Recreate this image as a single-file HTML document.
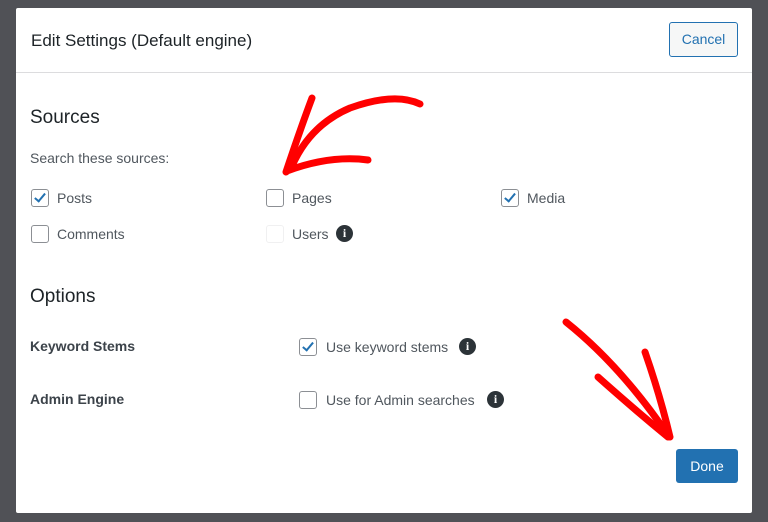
<!DOCTYPE html>
<html><head><meta charset="utf-8"><style>
body{margin:0;width:768px;height:522px;background:#505156;position:relative;overflow:hidden;font-family:"Liberation Sans",sans-serif;color:#2c3338}
.m{position:absolute;left:16px;top:8px;width:736px;height:505px;background:#fff;border-radius:2px}
.hd{height:64px;border-bottom:1px solid #dcdcde;position:relative}
.t{position:absolute;left:15px;top:23px;font-size:17px;color:#1d2327}
.cancel{position:absolute;right:14px;top:14px;width:67px;height:33px;border:1px solid #2271b1;border-radius:3px;background:#f6f7f7;color:#2271b1;font-size:14px;line-height:33px;text-align:center}
.a{position:absolute;font-size:14px}
.h{font-size:19px;color:#1d2327}
.cb{position:absolute;width:16px;height:16px;border:1px solid #8c8f94;border-radius:3px;background:#fff}
.cb.c::after{content:"";position:absolute;left:5px;top:1px;width:4px;height:9px;border:solid #2271b1;border-width:0 2.5px 2.5px 0;transform:rotate(40deg)}
.i{position:absolute;width:17px;height:17px;border-radius:50%;background:#2c3338;color:#fff;font:bold 12px/17px "Liberation Serif",serif;text-align:center}
.done{position:absolute;left:676px;top:449px;width:62px;height:34px;background:#2271b1;border-radius:3px;color:#fff;font-size:14px;line-height:34px;text-align:center}
</style></head><body>
<div class="m"><div class="hd"><div class="t">Edit Settings (Default engine)</div><div class="cancel">Cancel</div></div></div>
<div class="a h" style="left:30px;top:107px">Sources</div>
<div class="a" style="left:30px;top:150px;color:#50575e">Search these sources:</div>
<div class="cb c" style="left:31px;top:189px"></div><div class="a" style="left:57px;top:190px;color:#50575e">Posts</div>
<div class="cb" style="left:266px;top:189px"></div><div class="a" style="left:292px;top:190px;color:#50575e">Pages</div>
<div class="cb c" style="left:501px;top:189px"></div><div class="a" style="left:527px;top:190px;color:#50575e">Media</div>
<div class="cb" style="left:31px;top:225px"></div><div class="a" style="left:57px;top:226px;color:#50575e">Comments</div>
<div class="cb" style="left:266px;top:225px;border-color:#f0f0f1"></div><div class="a" style="left:292px;top:226px;color:#50575e">Users</div><div class="i" style="left:336px;top:225px">i</div>
<div class="a h" style="left:30px;top:286px">Options</div>
<div class="a" style="left:30px;top:338px;font-weight:bold;color:#3c434a">Keyword Stems</div>
<div class="cb c" style="left:299px;top:338px"></div><div class="a" style="left:326px;top:339px;color:#50575e">Use keyword stems</div><div class="i" style="left:459px;top:338px">i</div>
<div class="a" style="left:30px;top:391px;font-weight:bold;color:#3c434a">Admin Engine</div>
<div class="cb" style="left:299px;top:391px"></div><div class="a" style="left:326px;top:392px;color:#50575e">Use for Admin searches</div><div class="i" style="left:487px;top:391px">i</div>
<div class="done">Done</div>
<svg width="768" height="522" style="position:absolute;left:0;top:0" fill="none" stroke="#f00" stroke-width="7" stroke-linecap="round" stroke-linejoin="round">
<path d="M420 104 Q395 92 350 108 Q310 125 292 166"/>
<path d="M312 98 Q300 130 286 172"/>
<path d="M287 171 Q330 155 368 160"/>
<path d="M566 322 Q620 365 668 435"/>
<path d="M645 352 Q660 395 670 437"/>
<path d="M598 377 Q635 410 668 437"/>
</svg>
</body></html>
